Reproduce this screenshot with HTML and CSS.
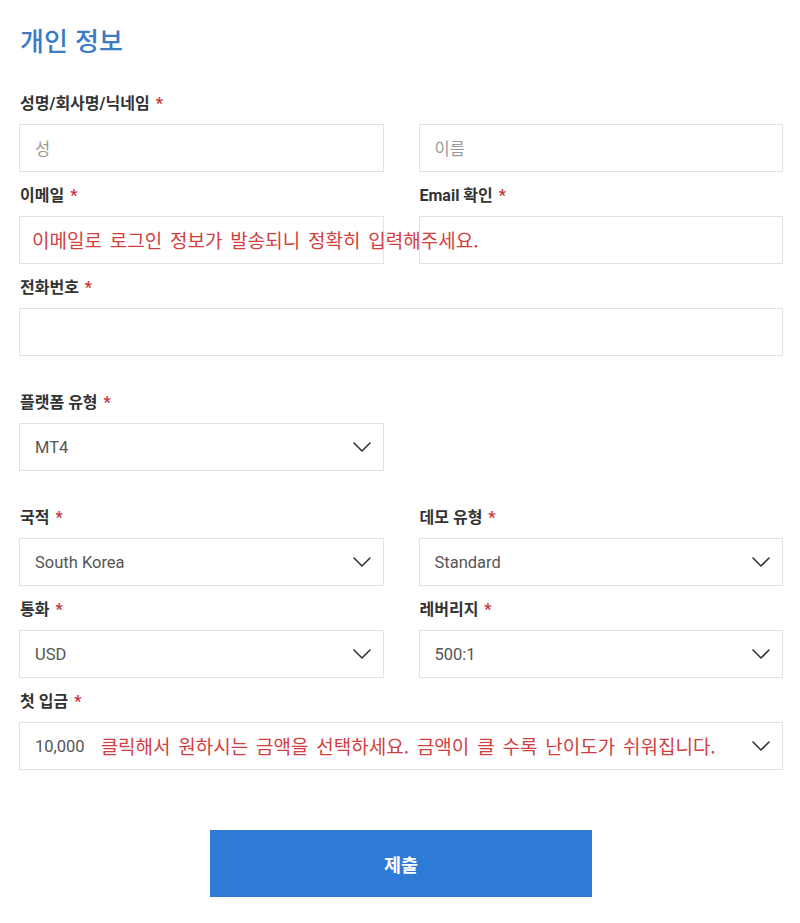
FILE: index.html
```html
<!DOCTYPE html>
<html lang="ko">
<head>
<meta charset="utf-8">
<title>개인 정보</title>
<link rel="stylesheet" href="styles.css">
</head>
<body>
<main class="form">
  <h1 class="title">개인 정보</h1>

  <div class="field">
    <div class="label">성명/회사명/닉네임 <span class="req">*</span></div>
    <div class="pair">
      <div class="input placeholder">성</div>
      <div class="input placeholder">이름</div>
    </div>
  </div>

  <div class="pair with-note">
    <div class="field">
      <div class="label">이메일 <span class="req">*</span></div>
      <div class="input"></div>
    </div>
    <div class="field">
      <div class="label">Email 확인 <span class="req">*</span></div>
      <div class="input"></div>
    </div>
    <span class="note note-email">이메일로 로그인 정보가 발송되니 정확히 입력해주세요.</span>
  </div>

  <div class="field">
    <div class="label">전화번호 <span class="req">*</span></div>
    <div class="input"></div>
  </div>

  <div class="pair section">
    <div class="field">
      <div class="label">플랫폼 유형 <span class="req">*</span></div>
      <div class="input select"><span class="value">MT4</span><svg class="chev" width="18" height="10" viewBox="0 0 18 10"><polyline points="1,1 9,9 17,1"/></svg></div>
    </div>
  </div>

  <div class="pair section">
    <div class="field">
      <div class="label">국적 <span class="req">*</span></div>
      <div class="input select"><span class="value">South Korea</span><svg class="chev" width="18" height="10" viewBox="0 0 18 10"><polyline points="1,1 9,9 17,1"/></svg></div>
    </div>
    <div class="field">
      <div class="label">데모 유형 <span class="req">*</span></div>
      <div class="input select"><span class="value">Standard</span><svg class="chev" width="18" height="10" viewBox="0 0 18 10"><polyline points="1,1 9,9 17,1"/></svg></div>
    </div>
  </div>

  <div class="pair">
    <div class="field">
      <div class="label">통화 <span class="req">*</span></div>
      <div class="input select"><span class="value">USD</span><svg class="chev" width="18" height="10" viewBox="0 0 18 10"><polyline points="1,1 9,9 17,1"/></svg></div>
    </div>
    <div class="field">
      <div class="label">레버리지 <span class="req">*</span></div>
      <div class="input select"><span class="value">500:1</span><svg class="chev" width="18" height="10" viewBox="0 0 18 10"><polyline points="1,1 9,9 17,1"/></svg></div>
    </div>
  </div>

  <div class="field">
    <div class="label">첫 입금 <span class="req">*</span></div>
    <div class="input select"><span class="value">10,000</span><span class="note note-deposit">클릭해서 원하시는 금액을 선택하세요. 금액이 클 수록 난이도가 쉬워집니다.</span><svg class="chev" width="18" height="10" viewBox="0 0 18 10"><polyline points="1,1 9,9 17,1"/></svg></div>
  </div>

  <div class="actions">
    <button class="submit" type="button">제출</button>
  </div>
</main>
</body>
</html>
```

FILE: styles.css
```css
* { box-sizing: border-box; }

html, body {
  margin: 0;
  padding: 0;
  background: #ffffff;
}

body {
  font-family: Roboto, "Noto Sans CJK KR", sans-serif;
  color: #333333;
}

.form {
  width: 764px;
  margin-left: 19px;
  padding-top: 24px;
  display: flex;
  flex-direction: column;
}

.title {
  margin: 0 0 38px 1px;
  font-family: "Noto Sans CJK KR", sans-serif;
  font-size: 26px;
  line-height: 32px;
  font-weight: 500;
  color: #3a7cc6;
}

.field {
  margin-bottom: 14px;
}

.pair > .field {
  margin-bottom: 0;
}

.pair {
  display: grid;
  grid-template-columns: 1fr 1fr;
  column-gap: 35px;
}

.form > .pair {
  margin-bottom: 14px;
}

.form > .pair.section {
  margin-top: 23px;
}

.with-note {
  position: relative;
}

.label {
  font-family: Roboto, "Noto Sans CJK KR", sans-serif;
  font-size: 16px;
  line-height: 20px;
  font-weight: 700;
  color: #333333;
  margin-bottom: 10px;
  padding-left: 1px;
}

.req {
  color: #c9343b;
  font-weight: 700;
  margin-left: 2px;
}

.input {
  height: 48px;
  border: 1px solid #e2e2e2;
  background: #ffffff;
  display: flex;
  align-items: center;
  padding: 0 12px 0 15px;
  font-family: Roboto, "Noto Sans CJK KR", sans-serif;
  font-size: 16.5px;
  color: #555555;
}

.placeholder {
  color: #9a9a9a;
}

.select .value {
  color: #555555;
}

.chev {
  margin-left: auto;
  flex: none;
}

.chev polyline {
  fill: none;
  stroke: #333333;
  stroke-width: 1.6;
  stroke-linecap: round;
  stroke-linejoin: round;
}

.note {
  font-family: "Noto Sans CJK KR", sans-serif;
  font-weight: 400;
  font-size: 19px;
  color: #d23f3f;
  white-space: nowrap;
  word-spacing: 2.5px;
}

.note-email {
  position: absolute;
  left: 13px;
  top: 42px;
  line-height: 24px;
}

.note-deposit {
  margin-left: 16px;
  line-height: 24px;
}

.actions {
  display: flex;
  justify-content: center;
  margin-top: 46px;
}

.submit {
  width: 382px;
  height: 67px;
  border: none;
  background: #2e7bd6;
  color: #ffffff;
  font-family: "Noto Sans CJK KR", sans-serif;
  font-size: 18.5px;
  font-weight: 700;
  cursor: pointer;
}
```
